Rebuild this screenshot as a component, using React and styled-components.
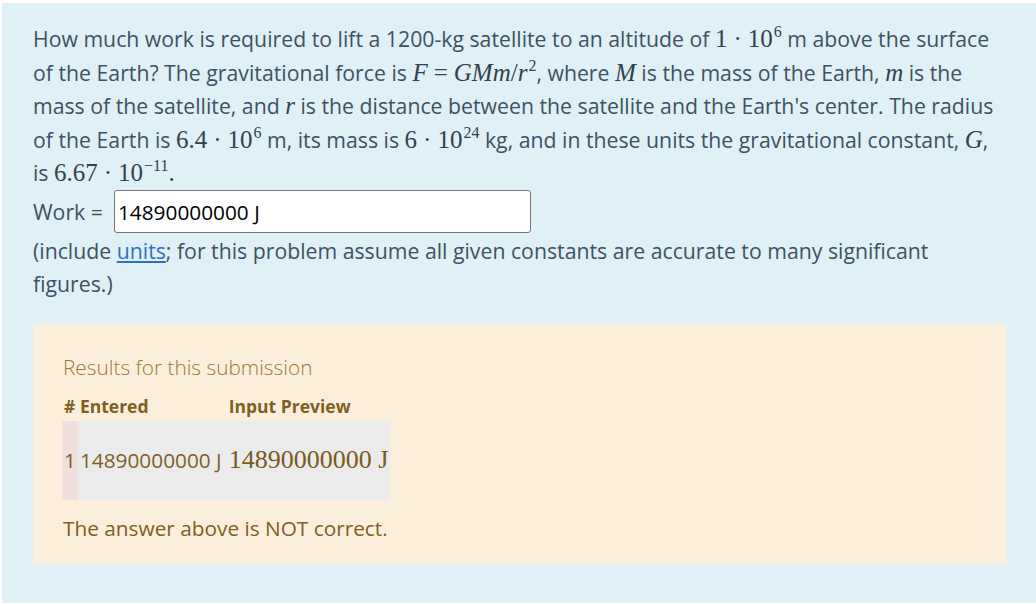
import React from "react";
import styled, { createGlobalStyle } from "styled-components";

const Global = createGlobalStyle`
    html, body {
        margin:0;
        padding:0;
        background:#ffffff;
    }
`;

const Page = styled.div`
    margin:3px 0 1px 2px;
    height:600px;
    box-sizing:border-box;
    background:#dff0f7;
    padding:19px 30px 0px 31px;
    font-family:"Open Sans", "Noto Sans", sans-serif;
    font-size:21.25px;
    color:#3e5261;
`;

const Text = styled.div`
    line-height:33.5px;
`;

const M = styled.span`
    font-family:"Liberation Serif", "DejaVu Serif", serif;
    font-size:25px;
    font-style:${p => (p.$i ? "italic" : "normal")};
    color:#33414b;
    white-space:nowrap;
`;

const Op = styled.span`
    margin:0 ${p => p.$gap || 6}px;
`;

const Sup = styled.sup`
    font-size:16px;
    line-height:0;
    vertical-align:10px;
    margin-left:1px;
`;

const AnswerRow = styled.div`
    display:flex;
    align-items:center;
    gap:11px;
    height:44px;
`;

const Input = styled.div`
    width:417px;
    height:43px;
    box-sizing:border-box;
    border:1px solid #767676;
    border-radius:3px;
    background:#fff;
    color:#000;
    font-size:20.8px;
    display:flex;
    align-items:center;
    padding-left:3px;
`;

const Link = styled.a`
    color:#2f6fc4;
    text-decoration:underline;
`;

const Results = styled.div`
    margin-top:23px;
    background:#fbeedb;
    padding:30px 30px 20px 30px;
    color:#7f5f22;
    font-size:20.8px;
`;

const Heading = styled.div`
    font-weight:300;
    color:#9b7a34;
    line-height:26px;
`;

const Table = styled.table`
    border-collapse:collapse;
    margin-top:14px;
    margin-left:-1px;
`;

const Th = styled.th`
    text-align:left;
    font-size:17.5px;
    font-weight:700;
    padding:0 2px 3px ${p => (p.$wide ? "5px" : "2px")};
`;

const Td = styled.td`
    height:79px;
    padding:0 2px 0 ${p => (p.$wide ? "5px" : "2px")};
    background:${p => (p.$num ? "#f1dfdd" : "#ebebeb")};
    white-space:nowrap;
`;

const Preview = styled.span`
    font-family:"Liberation Serif", "DejaVu Serif", serif;
    font-size:26px;
    color:#7a5a1e;
`;

const Verdict = styled.div`
    margin-top:12px;
    line-height:32px;
`;

const Dot = () => <Op>·</Op>;

const App = () => {
    return (
        <Page>
            <Global />
            <Text>
                How much work is required to lift a 1200-kg satellite to an altitude of <M>1<Dot />10<Sup>6</Sup></M> m above the surface
                of the Earth? The gravitational force is <M><i>F</i><Op>=</Op><i>GMm</i>/<i>r</i><Sup>2</Sup></M>, where <M $i>M</M> is the mass of the Earth, <M $i>m</M> is the
                mass of the satellite, and <M $i>r</M> is the distance between the satellite and the Earth's center. The radius
                of the Earth is <M>6.4<Dot />10<Sup>6</Sup></M> m, its mass is <M>6<Dot />10<Sup>24</Sup></M> kg, and in these units the gravitational constant, <M $i>G</M>,
                is <M>6.67<Dot />10<Sup>−11</Sup>.</M>
            </Text>
            <AnswerRow>
                <span>Work =</span>
                <Input>14890000000 J</Input>
            </AnswerRow>
            <Text>
                (include <Link href="#">units</Link>; for this problem assume all given constants are accurate to many significant
                figures.)
            </Text>
            <Results>
                <Heading>Results for this submission</Heading>
                <Table>
                    <thead>
                        <tr>
                            <Th>#</Th>
                            <Th>Entered</Th>
                            <Th $wide>Input Preview</Th>
                        </tr>
                    </thead>
                    <tbody>
                        <tr>
                            <Td $num>1</Td>
                            <Td>14890000000 J</Td>
                            <Td $wide><Preview>14890000000 J</Preview></Td>
                        </tr>
                    </tbody>
                </Table>
                <Verdict>The answer above is NOT correct.</Verdict>
            </Results>
        </Page>
    );
};

export default App;
